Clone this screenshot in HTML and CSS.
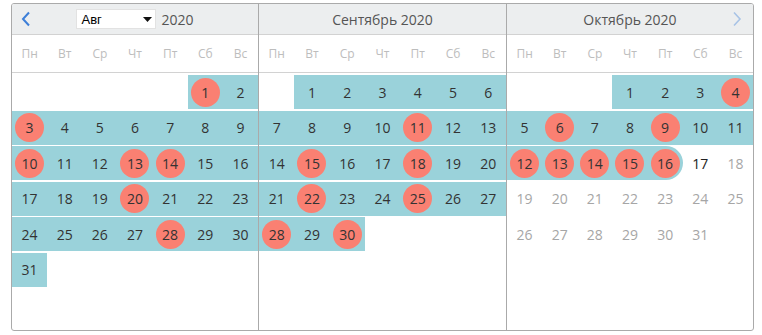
FILE: index.html
```html
<!DOCTYPE html>
<html>
<head>
<meta charset="utf-8" />
<title>Календарь</title>
<link rel="stylesheet" href="styles.css">
</head>
<body>
<div class="calendar">
  <div class="month">
    <div class="head">
      <svg class="nav prev" width="10" height="16" viewBox="0 0 10 16"><path d="M8 1.5 L2 8 L8 14.5" fill="none" stroke="#3d7fd8" stroke-width="2"/></svg>
      <div class="title">
        <span class="pick">
          <select><option>Авг</option></select>
          <svg class="caret" width="9" height="5" viewBox="0 0 9 5"><path d="M0 0 H9 L4.5 5 Z" fill="#111"/></svg>
        </span>
        <span class="year">2020</span>
      </div>
      <span></span>
    </div>
    <div class="week"><span>Пн</span><span>Вт</span><span>Ср</span><span>Чт</span><span>Пт</span><span>Сб</span><span>Вс</span></div>
    <div class="days">
      <div></div><div></div><div></div><div></div><div></div>
      <div class="day on"><span class="dot">1</span></div><div class="day on">2</div>
      <div class="day on"><span class="dot">3</span></div><div class="day on">4</div><div class="day on">5</div><div class="day on">6</div><div class="day on">7</div><div class="day on">8</div><div class="day on">9</div>
      <div class="day on"><span class="dot">10</span></div><div class="day on">11</div><div class="day on">12</div><div class="day on"><span class="dot">13</span></div><div class="day on"><span class="dot">14</span></div><div class="day on">15</div><div class="day on">16</div>
      <div class="day on">17</div><div class="day on">18</div><div class="day on">19</div><div class="day on"><span class="dot">20</span></div><div class="day on">21</div><div class="day on">22</div><div class="day on">23</div>
      <div class="day on">24</div><div class="day on">25</div><div class="day on">26</div><div class="day on">27</div><div class="day on"><span class="dot">28</span></div><div class="day on">29</div><div class="day on">30</div>
      <div class="day on">31</div>
    </div>
  </div>
  <div class="month">
    <div class="head">
      <span></span>
      <div class="title">Сентябрь 2020</div>
      <span></span>
    </div>
    <div class="week"><span>Пн</span><span>Вт</span><span>Ср</span><span>Чт</span><span>Пт</span><span>Сб</span><span>Вс</span></div>
    <div class="days">
      <div></div>
      <div class="day on">1</div><div class="day on">2</div><div class="day on">3</div><div class="day on">4</div><div class="day on">5</div><div class="day on">6</div>
      <div class="day on">7</div><div class="day on">8</div><div class="day on">9</div><div class="day on">10</div><div class="day on"><span class="dot">11</span></div><div class="day on">12</div><div class="day on">13</div>
      <div class="day on">14</div><div class="day on"><span class="dot">15</span></div><div class="day on">16</div><div class="day on">17</div><div class="day on"><span class="dot">18</span></div><div class="day on">19</div><div class="day on">20</div>
      <div class="day on">21</div><div class="day on"><span class="dot">22</span></div><div class="day on">23</div><div class="day on">24</div><div class="day on"><span class="dot">25</span></div><div class="day on">26</div><div class="day on">27</div>
      <div class="day on"><span class="dot">28</span></div><div class="day on">29</div><div class="day on"><span class="dot">30</span></div>
    </div>
  </div>
  <div class="month">
    <div class="head">
      <span></span>
      <div class="title">Октябрь 2020</div>
      <svg class="nav next" width="10" height="16" viewBox="0 0 10 16"><path d="M2 1.5 L8 8 L2 14.5" fill="none" stroke="#a8c3e6" stroke-width="1.6"/></svg>
    </div>
    <div class="week"><span>Пн</span><span>Вт</span><span>Ср</span><span>Чт</span><span>Пт</span><span>Сб</span><span>Вс</span></div>
    <div class="days">
      <div></div><div></div><div></div>
      <div class="day on">1</div><div class="day on">2</div><div class="day on">3</div><div class="day on"><span class="dot">4</span></div>
      <div class="day on">5</div><div class="day on"><span class="dot">6</span></div><div class="day on">7</div><div class="day on">8</div><div class="day on"><span class="dot">9</span></div><div class="day on">10</div><div class="day on">11</div>
      <div class="day on"><span class="dot">12</span></div><div class="day on"><span class="dot">13</span></div><div class="day on"><span class="dot">14</span></div><div class="day on"><span class="dot">15</span></div><div class="day on end"><span class="dot">16</span></div><div class="day today">17</div><div class="day off">18</div>
      <div class="day off">19</div><div class="day off">20</div><div class="day off">21</div><div class="day off">22</div><div class="day off">23</div><div class="day off">24</div><div class="day off">25</div>
      <div class="day off">26</div><div class="day off">27</div><div class="day off">28</div><div class="day off">29</div><div class="day off">30</div><div class="day off">31</div>
    </div>
  </div>
</div>
</body>
</html>
```

FILE: styles.css
```css
* {
  box-sizing: border-box;
}
body {
  margin: 0;
  padding: 3px 0 0 11px;
  background: #fff;
  font-family: 'Open Sans', sans-serif;
}
.calendar {
  width: 743px;
  height: 328px;
  display: grid;
  grid-template-columns: 246px 249px 246px;
  border: 1px solid #aaa;
  border-radius: 3px;
  overflow: hidden;
}
.month:nth-child(2) {
  border-left: 1px solid #aaa;
  border-right: 1px solid #aaa;
}
.month > .head {
  height: 31px;
  background-color: #eceeef;
  border-bottom: 1px solid #d2d2d2;
  display: grid;
  grid-template-columns: 1fr auto 1fr;
  align-items: center;
  font-size: 14px;
  color: #555;
}
.head .nav.prev {
  margin-left: 9px;
}
.head .nav.next {
  justify-self: end;
  margin-right: 11px;
}
.head .title {
  display: flex;
  align-items: center;
  white-space: nowrap;
}
.head .pick {
  position: relative;
  display: inline-block;
}
.head select {
  -webkit-appearance: none;
  appearance: none;
  width: 80px;
  height: 20px;
  margin: 0;
  padding: 0 0 0 4px;
  border: 1px solid #e2e2e2;
  border-radius: 0;
  background: #fff;
  font-family: 'Liberation Sans', Arial, sans-serif;
  font-size: 13px;
  color: #000;
  outline: none;
}
.head .caret {
  position: absolute;
  right: 4px;
  top: 8px;
  pointer-events: none;
}
.head .year {
  margin-left: 5px;
}
.month > .week {
  height: 38px;
  display: grid;
  grid-template-columns: repeat(7, 1fr);
  align-items: center;
  text-align: center;
  font-size: 12px;
  color: #bdbdbd;
  border-bottom: 1px solid #d2d2d2;
}
.month > .days {
  display: grid;
  grid-template-columns: repeat(7, 1fr);
  grid-auto-rows: 34px;
  row-gap: 1.5px;
  padding-top: 2px;
}
.day {
  display: flex;
  align-items: center;
  justify-content: center;
  font-size: 14px;
  color: #333;
}
.day.on {
  background-color: #9ad2da;
}
.day.end {
  border-radius: 0 17px 17px 0;
}
.day.today {
  color: #222;
}
.day.off {
  color: #a6a6a6;
}
.day .dot {
  width: 29px;
  height: 29px;
  border-radius: 50%;
  background-color: #fa8072;
  display: flex;
  align-items: center;
  justify-content: center;
}
```
